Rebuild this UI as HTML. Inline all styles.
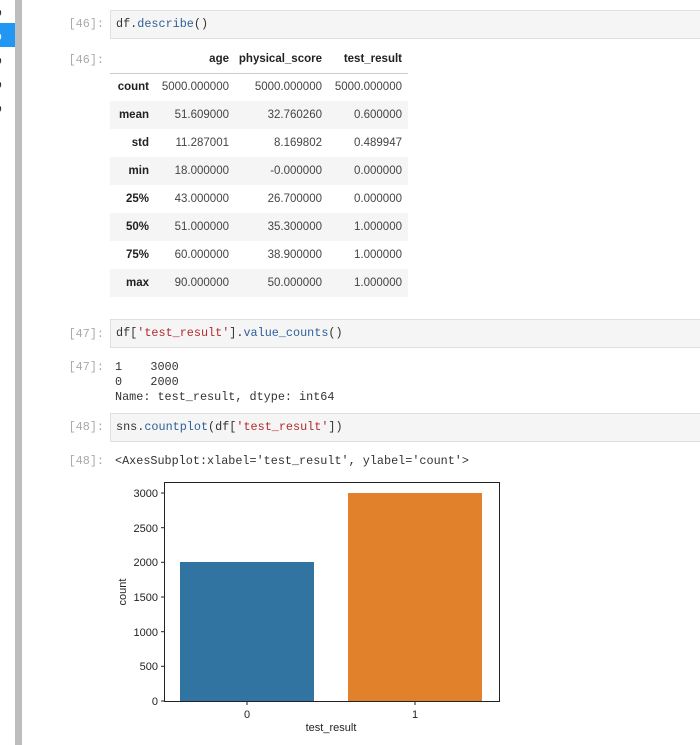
<!DOCTYPE html>
<html><head><meta charset="utf-8"><style>
*{margin:0;padding:0;box-sizing:border-box}
body{width:700px;height:745px;background:#fff;position:relative;overflow:hidden;font-family:"Liberation Sans",sans-serif}
.abs{position:absolute}
.mono{font-family:"Liberation Mono",monospace;font-size:11.8px}
.prompt{position:absolute;width:70px;left:34px;text-align:right;color:#aaa;font-family:"Liberation Mono",monospace;font-size:11.8px}
.inp{position:absolute;left:110px;width:600px;height:29px;background:#f5f5f5;border:1px solid #e0e0e0;padding:6px 5px;color:#333}
.kw{color:#2f5f9a}.st{color:#b22b31}
table{position:absolute;left:110px;top:46px;border-collapse:collapse;font-size:11.5px;color:#444;table-layout:fixed;width:298px}
td,th{height:28px;text-align:right;padding:0 6px 0 0;white-space:nowrap}
th{font-weight:bold;color:#222}
thead th{border-bottom:1px solid #ccc;height:27px}
tbody tr:nth-child(even){background:#f5f5f5}
</style></head><body>
<div class="abs" style="left:0;top:23px;width:15px;height:24px;background:#2196f3"></div>
<div class="abs" style="left:-5px;top:0px;font-size:12px;line-height:24px;color:#333">o<br><span style="color:#fff">o</span><br>o<br>o<br>o</div>
<div class="abs" style="left:15px;top:0;width:7px;height:745px;background:#bdbdbd"></div>

<div class="prompt" style="top:17px">[46]:</div>
<div class="inp mono" style="top:10px">df.<span class="kw">describe</span>()</div>
<div class="prompt" style="top:53px">[46]:</div>
<table>
<colgroup><col style="width:45px"><col style="width:80px"><col style="width:93px"><col style="width:80px"></colgroup>
<thead><tr><th></th><th>age</th><th>physical_score</th><th>test_result</th></tr></thead>
<tbody>
<tr><th>count</th><td>5000.000000</td><td>5000.000000</td><td>5000.000000</td></tr>
<tr><th>mean</th><td>51.609000</td><td>32.760260</td><td>0.600000</td></tr>
<tr><th>std</th><td>11.287001</td><td>8.169802</td><td>0.489947</td></tr>
<tr><th>min</th><td>18.000000</td><td>-0.000000</td><td>0.000000</td></tr>
<tr><th>25%</th><td>43.000000</td><td>26.700000</td><td>0.000000</td></tr>
<tr><th>50%</th><td>51.000000</td><td>35.300000</td><td>1.000000</td></tr>
<tr><th>75%</th><td>60.000000</td><td>38.900000</td><td>1.000000</td></tr>
<tr><th>max</th><td>90.000000</td><td>50.000000</td><td>1.000000</td></tr>
</tbody></table>

<div class="prompt" style="top:327px">[47]:</div>
<div class="inp mono" style="top:319px">df[<span class="st">'test_result'</span>].<span class="kw">value_counts</span>()</div>
<div class="prompt" style="top:360px">[47]:</div>
<pre class="abs mono" style="left:115px;top:360px;line-height:15px;color:#333">1    3000
0    2000
Name: test_result, dtype: int64</pre>

<div class="prompt" style="top:420px">[48]:</div>
<div class="inp mono" style="top:413px">sns.<span class="kw">countplot</span>(df[<span class="st">'test_result'</span>])</div>
<div class="prompt" style="top:454px">[48]:</div>
<div class="abs mono" style="left:115px;top:454px;color:#333">&lt;AxesSubplot:xlabel='test_result', ylabel='count'&gt;</div>

<svg class="abs" style="left:0;top:0" width="700" height="745">
<g font-family="Liberation Sans,sans-serif" font-size="11" fill="#222">
<rect x="180" y="562" width="134" height="139" fill="#3274a1"/>
<rect x="348" y="493" width="134" height="208" fill="#e1812c"/>
<rect x="164.5" y="482.5" width="335" height="219" fill="none" stroke="#222" stroke-width="1"/>
<g stroke="#222">
<line x1="161" y1="701" x2="164" y2="701"/><line x1="161" y1="666.3" x2="164" y2="666.3"/><line x1="161" y1="631.7" x2="164" y2="631.7"/><line x1="161" y1="597" x2="164" y2="597"/><line x1="161" y1="562.3" x2="164" y2="562.3"/><line x1="161" y1="527.7" x2="164" y2="527.7"/><line x1="161" y1="493" x2="164" y2="493"/>
<line x1="247" y1="702" x2="247" y2="705"/><line x1="415" y1="702" x2="415" y2="705"/>
</g>
<g text-anchor="end">
<text x="158" y="705">0</text><text x="158" y="670">500</text><text x="158" y="636">1000</text><text x="158" y="601">1500</text><text x="158" y="566">2000</text><text x="158" y="532">2500</text><text x="158" y="497">3000</text>
</g>
<text x="247" y="718" text-anchor="middle">0</text>
<text x="415" y="718" text-anchor="middle">1</text>
<text x="331" y="731" text-anchor="middle">test_result</text>
<text transform="translate(126,592) rotate(-90)" text-anchor="middle">count</text>
</g>
</svg>
</body></html>
